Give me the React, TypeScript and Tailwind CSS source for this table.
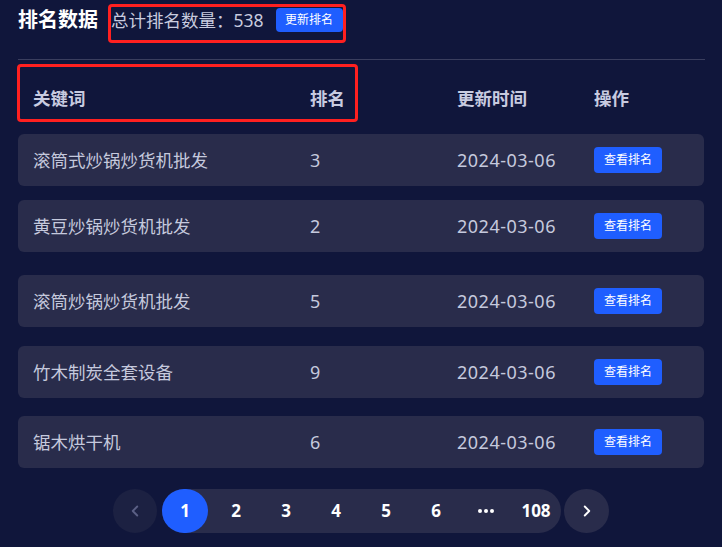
import { ChevronLeft, ChevronRight } from 'lucide-react';

const rows = [
  { keyword: '滚筒式炒锅炒货机批发', rank: 3, date: '2024-03-06', gap: 'mt-0' },
  { keyword: '黄豆炒锅炒货机批发', rank: 2, date: '2024-03-06', gap: 'mt-[14px]' },
  { keyword: '滚筒炒锅炒货机批发', rank: 5, date: '2024-03-06', gap: 'mt-[23px]' },
  { keyword: '竹木制炭全套设备', rank: 9, date: '2024-03-06', gap: 'mt-[19px]' },
  { keyword: '锯木烘干机', rank: 6, date: '2024-03-06', gap: 'mt-[18px]' },
];

const pages = ['2', '3', '4', '5', '6', 'more', '108'];

export default function App() {
  return (
    <div
      className="w-[722px] h-[547px] overflow-hidden bg-[#10163b] pl-[18px] pr-[17px] text-[#c5c9dd]"
      style={{ fontFamily: '"Noto Sans", "Microsoft YaHei", "Noto Sans CJK SC", sans-serif' }}
    >
      {/* title bar */}
      <div className="flex items-start pt-[4px]">
        <h1 className="mt-[3px] text-[20px] font-bold leading-[26px] text-white">排名数据</h1>
        <div className="ml-[10px] flex h-[39px] w-[238px] items-start gap-[12px] rounded-[4px] border-[3px] border-[#ff2020] pt-[1px]">
          <span className="whitespace-nowrap text-[17.5px] leading-[24px] text-[#c8cbdf]">总计排名数量：538</span>
          <button className="flex h-[24px] w-[67px] shrink-0 items-center justify-center rounded-[4px] bg-[#1f5eff] text-[12px] text-white">
            更新排名
          </button>
        </div>
      </div>

      <div className="mt-[16px] border-t border-[#3a3e5e]" />

      {/* table header */}
      <div className="relative flex h-[74px] items-center pl-[15px] pt-[2px] text-[17.5px] font-bold text-[#c8cbe0]">
        <div className="absolute left-[-1px] top-[4px] h-[58px] w-[341px] rounded-[4px] border-[3px] border-[#ff2020]" />
        <span className="w-[277px]">关键词</span>
        <span className="w-[147px]">排名</span>
        <span className="w-[137px]">更新时间</span>
        <span>操作</span>
      </div>

      {/* rows */}
      {rows.map((r) => (
        <div
          key={r.keyword}
          className={`${r.gap} flex h-[52px] w-[686px] items-center rounded-[6px] bg-[#292c4b] pl-[15px] text-[17.5px]`}
        >
          <span className="w-[277px]">{r.keyword}</span>
          <span className="w-[147px] text-[18px]">{r.rank}</span>
          <span className="w-[137px] text-[18px] tracking-[0.5px]">{r.date}</span>
          <button className="flex h-[26px] w-[68px] items-center justify-center rounded-[4px] bg-[#1f5eff] text-[12px] text-white">
            查看排名
          </button>
        </div>
      ))}

      {/* pagination */}
      <div className="mt-[21px] flex justify-center pr-[1px]">
        <button className="flex h-[44px] w-[44px] items-center justify-center rounded-full bg-[#1c2142] text-[#5b6085]">
          <ChevronLeft size={18} strokeWidth={2.5} />
        </button>
        <div className="ml-[5px] flex h-[44px] w-[399px] items-center rounded-full bg-[#292c4b] text-[17px] font-bold text-white">
          <span className="flex h-[44px] w-[46px] items-center justify-center rounded-full bg-[#1f5eff]">1</span>
          <div className="ml-[3px] flex">
            {pages.map((p) => (
              <span key={p} className="flex h-[44px] w-[50px] items-center justify-center">
                {p === 'more' ? (
                  <span className="flex gap-[2px]">
                    <i className="h-[4px] w-[4px] rounded-full bg-white" />
                    <i className="h-[4px] w-[4px] rounded-full bg-white" />
                    <i className="h-[4px] w-[4px] rounded-full bg-white" />
                  </span>
                ) : (
                  p
                )}
              </span>
            ))}
          </div>
        </div>
        <button className="ml-[3px] flex h-[44px] w-[45px] items-center justify-center rounded-full bg-[#292c4b] text-white">
          <ChevronRight size={18} strokeWidth={2.5} />
        </button>
      </div>
    </div>
  );
}
